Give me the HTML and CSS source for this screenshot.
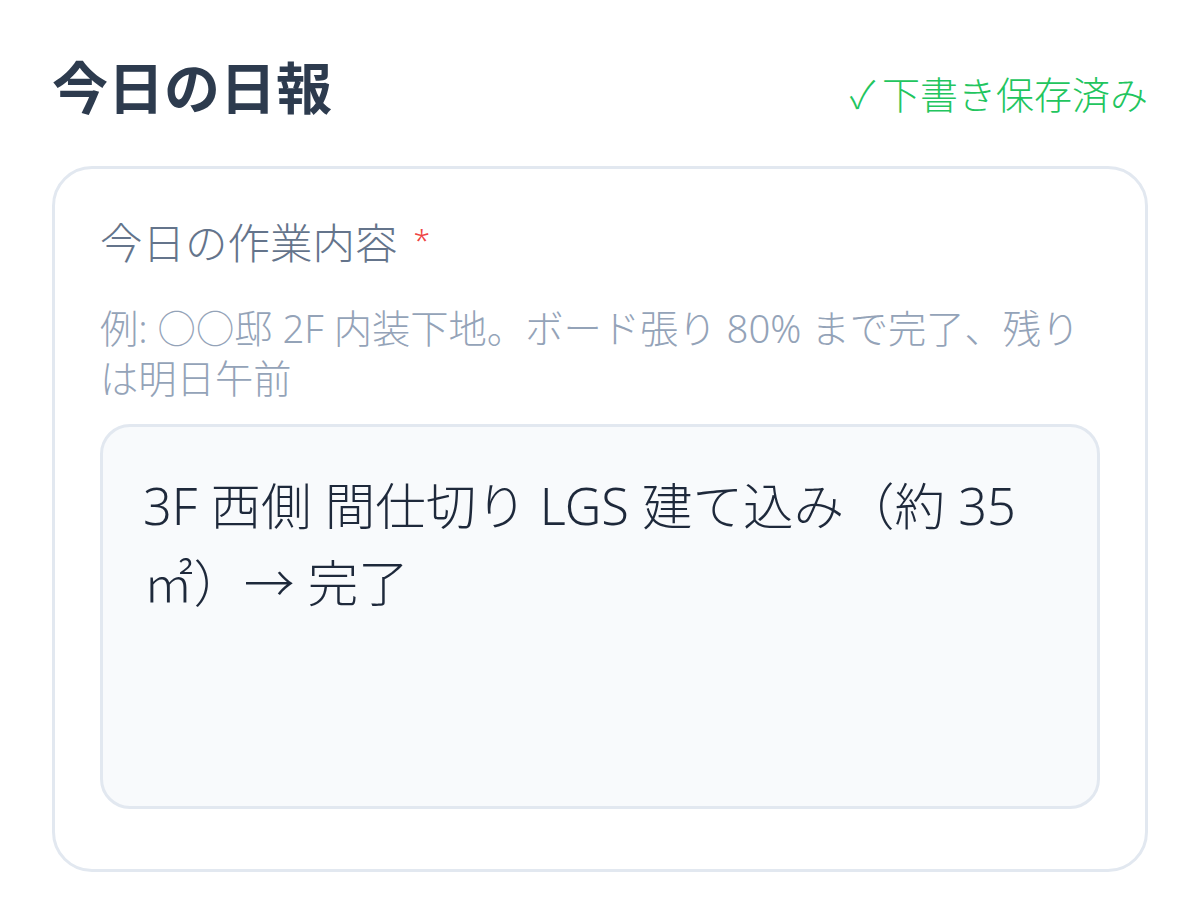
FILE: index.html
```html
<!DOCTYPE html>
<html lang="ja">
<head>
<meta charset="utf-8">
<title>今日の日報</title>
<link rel="stylesheet" href="styles.css">
</head>
<body>
<main class="page">
  <header class="page-header">
    <h1 class="page-title">今日の日報</h1>
    <span class="save-status"><span class="save-check">✓</span>下書き保存済み</span>
  </header>
  <section class="card">
    <label class="field-label" for="work">今日の作業内容<span class="required">*</span></label>
    <p class="field-hint">例: ○○邸 2F 内装下地。ボード張り 80% まで完了、残りは明日午前</p>
    <textarea id="work" class="field-input">3F 西側 間仕切り LGS 建て込み（約 35㎡）→ 完了</textarea>
  </section>
</main>
</body>
</html>
```
FILE: styles.css
```css
* { box-sizing: border-box; }
html, body { margin: 0; padding: 0; background: #ffffff; }
body {
  font-family: "Noto Sans", "Noto Sans CJK JP", sans-serif;
  color: #1e293b;
}
.page {
  padding: 51px 52px 0 52px;
}
.page-header {
  display: flex;
  justify-content: space-between;
  align-items: baseline;
  margin-bottom: 48px;
}
.page-title {
  margin: 0;
  font-family: "Noto Sans CJK JP", sans-serif;
  font-size: 56px;
  line-height: 67px;
  font-weight: 700;
  color: #2d3b4e;
}
.save-status {
  font-family: "Noto Sans CJK JP", sans-serif;
  font-size: 38px;
  line-height: 50px;
  font-weight: 300;
  color: #22c55e;
}
.save-check {
  margin-right: 7px;
}
.card {
  border: 3px solid #e2e8f0;
  border-radius: 40px;
  background: #ffffff;
  padding: 42px 45px 60px 45px;
  display: flex;
  flex-direction: column;
}
.field-label {
  font-size: 42.5px;
  line-height: 63px;
  font-weight: 300;
  color: #64748b;
}
.required {
  display: inline-block;
  vertical-align: top;
  font-size: 30px;
  line-height: 30px;
  margin-top: 14px;
  color: #ef4444;
  margin-left: 16px;
}
.field-hint {
  margin: 29px 0 21px 0;
  font-size: 38.3px;
  line-height: 50px;
  font-weight: 300;
  color: #94a3b8;
}
.field-input {
  display: block;
  width: 100%;
  height: 385px;
  border: 3px solid #e2e8f0;
  border-radius: 30px;
  background: #f8fafc;
  padding: 40px 40px;
  font-family: inherit;
  font-size: 50.5px;
  line-height: 77px;
  font-weight: 300;
  color: #1e293b;
  resize: none;
  overflow: hidden;
  outline: none;
}
```
